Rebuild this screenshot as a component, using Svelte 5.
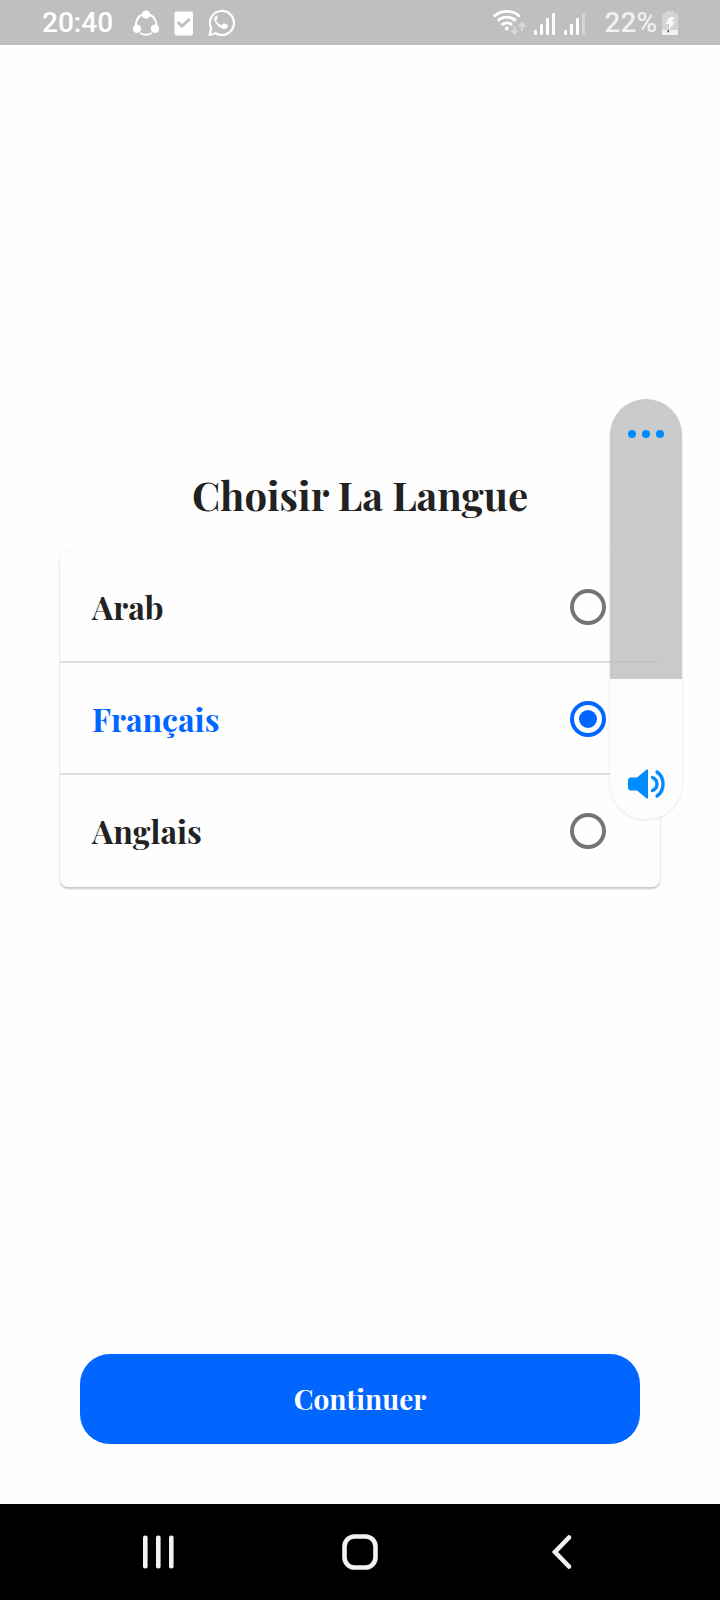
<script>
  const languages = [
    { id: 'ar', label: 'Arab' },
    { id: 'fr', label: 'Français' },
    { id: 'en', label: 'Anglais' }
  ];
  const maxVolume = 15;
  let selected = $state('fr');
  let volume = $state(5);
</script>

<div class="screen">
  <header class="status">
    <div class="group left">
      <span class="time">20:40</span>
      <div class="notices">
        <svg width="28" height="28" viewBox="0 0 28 28" fill="none" aria-hidden="true">
          <path d="M4 17A11 11 0 0 1 10.500 5.500M17.500 5.500Q24.500 9 24.500 17M8 24q6 3.500 12 0" stroke="#fff" stroke-width="2" />
          <circle cx="14" cy="5.500" r="4" fill="#fff" />
          <circle cx="5" cy="19.700" r="4.200" fill="#fff" />
          <circle cx="23" cy="19.700" r="4.200" fill="#fff" />
        </svg>
        <svg width="20" height="28" viewBox="0 0 20 28" fill="none" aria-hidden="true">
          <rect x=".5" y="2.500" width="18.500" height="24" rx="2" fill="#fff" />
          <path d="M3.700 13l4.300 4.300L15.500 10" stroke="#bfbfbf" stroke-width="2.800" />
        </svg>
        <svg width="28" height="28" viewBox="0 0 28 28" fill="none" aria-hidden="true">
          <g transform="translate(-.8 -.5)">
            <path d="M2.300 26.500l1.800-6.600A12 12 0 1 1 8.600 24.700z" stroke="#fff" stroke-width="2.200" stroke-linejoin="round" />
            <path d="M10.300 7.700c-.5-.9-1.300-.9-1.900-.3-1.500 1.500-1.700 3.400-.8 5.400 1.700 3.700 4.500 6.200 8 7.400 2 .6 4.400-.2 5-2.300.2-.9.100-1.300-.5-1.600l-3-1.500c-.6-.3-.9-.1-1.300.4l-.9 1.200c-.4.4-.7.400-1.200.2-2-.9-3.500-2.300-4.600-4.300-.2-.4-.1-.7.200-1l.9-1.200c.2-.3.200-.6.100-.9z" fill="#fff" />
          </g>
        </svg>
      </div>
    </div>
    <div class="group right">
      <svg width="34" height="28" viewBox="0 0 34 28" fill="none" aria-hidden="true">
        <g stroke="#fff" stroke-width="2.800">
          <path d="M.8 7.500a19 19 0 0 1 26 0" />
          <path d="M4.800 11.800a13 13 0 0 1 18 0" />
          <path d="M8.600 15.900a7.500 7.500 0 0 1 10.400 0" />
        </g>
        <circle cx="13.800" cy="19.500" r="1.900" fill="#fff" />
        <g stroke="#d9d9d9" stroke-width="2">
          <path d="M21.500 17v7M18.500 21l3 3.500 3-3.500" />
          <path d="M29 22v-7M26 17.500l3-3.500 3 3.500" />
        </g>
      </svg>
      {#each [1, 0.35] as strength}
        <svg width="24" height="28" viewBox="0 0 24 28" fill="#fff" aria-hidden="true">
          <rect x="1" y="21" width="3" height="5" rx="1" />
          <rect x="7" y="15" width="3" height="11" rx="1" />
          <rect x="13" y="9" width="3" height="17" rx="1" />
          <rect x="19" y="4" width="3" height="22" rx="1" opacity={strength} />
        </svg>
      {/each}
      <div class="power">
        <span>22%</span>
        <svg width="18" height="28" viewBox="0 0 18 28" aria-hidden="true">
          <path d="M5 4V2h8v2h3q1 0 1 1v20q0 1-1 1H2q-1 0-1-1V5q0-1 1-1z" fill="#d4d4d4" />
          <path d="M1 21h16v4q0 1-1 1H2q-1 0-1-1z" fill="#f2f2f2" />
          <path d="M8.500 8h5l-2.500 5h3L7 22l1.500-7H4.500z" fill="#f7f7f7" />
          <path d="M7.800 21l-1 2.300" stroke="#333" stroke-width="1.200" />
        </svg>
      </div>
    </div>
  </header>

  <main>
    <fieldset>
      <legend>Choisir La Langue</legend>
      <div class="card">
        {#each languages as language (language.id)}
          <label class:active={selected === language.id}>
            <span>{language.label}</span>
            <input type="radio" name="language" value={language.id} bind:group={selected} />
          </label>
        {/each}
      </div>
    </fieldset>
    <button class="continue" type="button">Continuer</button>
  </main>

  <aside class="volume">
    <input
      type="range"
      min="0"
      max={maxVolume}
      aria-label="Volume"
      bind:value={volume}
      style="--level: {(volume / maxVolume) * 100}%"
    />
    <button class="more" type="button" aria-label="Options">
      <svg width="40" height="10" viewBox="0 0 40 10" fill="#008cff" aria-hidden="true">
        <circle cx="6" cy="5" r="4" /><circle cx="20" cy="5" r="4" /><circle cx="34" cy="5" r="4" />
      </svg>
    </button>
    <svg class="speaker" width="40" height="32" viewBox="0 0 40 32" fill="none" aria-hidden="true">
      <path d="M5 9.500h6l9-7.500q2-1.500 2 0v28q0 1.500-2 0L11 22.500H5q-3 0-3-3v-7q0-3 3-3z" fill="#008cff" />
      <path d="M26.500 9.500q4.500 2 4.500 6.500t-4.500 6.500M31 4q6 4 6 12t-6 12" stroke="#008cff" stroke-width="3.400" stroke-linecap="round" />
    </svg>
  </aside>

  <nav>
    <button type="button" aria-label="Applications récentes">
      <svg width="40" height="40" viewBox="0 0 40 40" fill="#f2f2f2" aria-hidden="true">
        <rect x="4" y="3.500" width="4.600" height="33" rx="2" />
        <rect x="17" y="3.500" width="4.600" height="33" rx="2" />
        <rect x="30" y="3.500" width="4.600" height="33" rx="2" />
      </svg>
    </button>
    <button type="button" aria-label="Accueil">
      <svg width="40" height="40" viewBox="0 0 40 40" fill="none" aria-hidden="true">
        <rect x="4.500" y="4.500" width="31" height="31" rx="10" stroke="#f2f2f2" stroke-width="4.600" />
      </svg>
    </button>
    <button type="button" aria-label="Retour">
      <svg width="40" height="40" viewBox="0 0 40 40" fill="none" aria-hidden="true">
        <path d="M28 5.500L14 20l14 14.500" stroke="#f2f2f2" stroke-width="4.600" stroke-linecap="round" />
      </svg>
    </button>
  </nav>
</div>

<style>
  :global(body) {
    margin: 0;
  }
  .screen {
    position: relative;
    display: flex;
    flex-direction: column;
    min-height: 100vh;
    background: #fefefe;
    color: #222;
    font-family: "Playfair Display", "Liberation Serif", serif;
    font-weight: 700;
  }
  button {
    margin: 0;
    padding: 0;
    border: 0;
    background: none;
    font: inherit;
    cursor: pointer;
  }
  svg {
    display: block;
    flex: none;
  }
  .status {
    display: flex;
    align-items: center;
    justify-content: space-between;
    box-sizing: border-box;
    height: 45px;
    padding: 1px 41px 0 42px;
    background: #bfbfbf;
    color: #fff;
    font: 500 28px/32px Roboto, sans-serif;
  }
  .group {
    display: flex;
    align-items: center;
  }
  .left {
    gap: 19px;
  }
  .notices {
    display: flex;
    gap: 14px;
  }
  .right {
    gap: 6px;
  }
  .power {
    display: flex;
    align-items: center;
    gap: 4px;
    margin-left: 12px;
    color: #f0f0f0;
  }
  main {
    flex: 1;
    display: flex;
    flex-direction: column;
    justify-content: space-between;
    padding: 426px 60px 60px;
  }
  fieldset {
    min-width: 0;
    margin: 0;
    padding: 0;
    border: 0;
  }
  legend {
    width: 100%;
    margin-bottom: 32px;
    padding: 0;
    font-size: 40px;
    line-height: 48px;
    text-align: center;
  }
  .card {
    border-radius: 8px;
    background: #fefefe;
    box-shadow: 0 2px 2px rgba(0, 0, 0, 0.2), 0 0 2px rgba(0, 0, 0, 0.08);
  }
  label {
    display: flex;
    align-items: center;
    justify-content: space-between;
    box-sizing: border-box;
    height: 112px;
    padding: 2px 54px 0 32px;
    border-bottom: 2px solid #dedede;
    font-size: 32px;
    line-height: 40px;
    cursor: pointer;
  }
  label:last-child {
    border-bottom-color: transparent;
  }
  label.active {
    color: #0066ff;
  }
  input[type="radio"] {
    appearance: none;
    flex: none;
    width: 36px;
    height: 36px;
    margin: 0;
    border: 4px solid #757575;
    border-radius: 50%;
  }
  input[type="radio"]:checked {
    padding: 5px;
    border-color: #0066ff;
    background: #0066ff content-box;
  }
  .continue {
    height: 90px;
    margin: 0 20px;
    border-radius: 30px;
    background: #0066ff;
    color: #fff;
    font-size: 28px;
    line-height: 36px;
  }
  .volume {
    position: absolute;
    top: 399px;
    right: 38px;
    display: grid;
    grid-template: 70px 1fr 70px / 72px;
    justify-items: center;
    align-items: center;
    height: 420px;
    border-radius: 36px;
    overflow: hidden;
    box-shadow: 0 1px 2px 1px rgba(0, 0, 0, 0.06);
  }
  input[type="range"] {
    appearance: none;
    grid-area: 1 / 1 / 4 / 2;
    writing-mode: vertical-lr;
    direction: rtl;
    width: 100%;
    height: 100%;
    margin: 0;
    background: linear-gradient(to top, #fdfdfd var(--level), rgba(188, 188, 188, 0.78) var(--level));
  }
  input[type="range"]::-webkit-slider-thumb {
    appearance: none;
    width: 72px;
    height: 2px;
    background: transparent;
  }
  .more {
    grid-area: 1 / 1;
    padding: 16px;
  }
  .speaker {
    grid-area: 3 / 1;
    pointer-events: none;
  }
  nav {
    display: grid;
    grid-template-columns: repeat(3, 1fr);
    height: 96px;
    padding: 0 58px;
    background: #000;
  }
  nav button {
    display: grid;
    place-items: center;
  }
</style>
